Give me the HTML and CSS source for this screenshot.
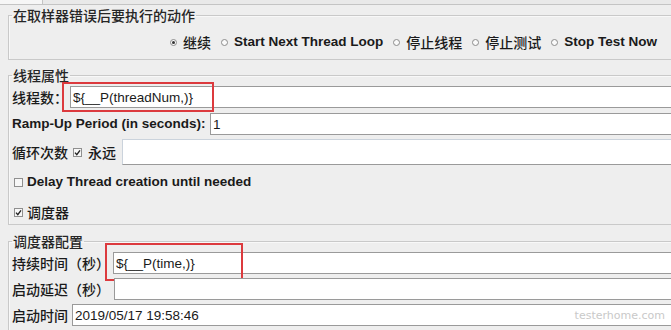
FILE: index.html
```html
<!DOCTYPE html>
<html lang="zh-CN">
<head>
<meta charset="utf-8">
<title>线程组</title>
<link rel="stylesheet" href="styles.css">
</head>
<body>
<div class="page">
  <div class="topbar"><div class="tab"></div></div>

  <fieldset class="group g-err">
    <legend>在取样器错误后要执行的动作</legend>
    <div class="radios">
      <label class="radio"><span class="dot on"></span><span class="cjk">继续</span></label>
      <label class="radio"><span class="dot"></span><span class="en">Start Next Thread Loop</span></label>
      <label class="radio"><span class="dot"></span><span class="cjk">停止线程</span></label>
      <label class="radio"><span class="dot"></span><span class="cjk">停止测试</span></label>
      <label class="radio"><span class="dot"></span><span class="en">Stop Test Now</span></label>
    </div>
  </fieldset>

  <fieldset class="group g-thread">
    <legend>线程属性</legend>
    <div class="row r1">
      <span class="label cjk w-num">线程数：</span>
      <div class="field"><span class="val">${__P(threadNum,)}</span><span class="mark m1"></span></div>
    </div>
    <div class="row r2">
      <span class="label en w-ramp">Ramp-Up Period (in seconds):</span>
      <div class="field"><span class="val">1</span></div>
    </div>
    <div class="row r3">
      <span class="label cjk w-loop">循环次数</span>
      <span class="check on"><svg viewBox="0 0 9 9" width="9" height="9"><path d="M2 4.6 L3.8 6.6 L7 2.4" fill="none" stroke="#222" stroke-width="1.4"/></svg></span>
      <span class="label cjk w-ever">永远</span>
      <div class="field light"></div>
    </div>
    <div class="row r4">
      <span class="check"></span>
      <span class="en">Delay Thread creation until needed</span>
    </div>
    <div class="row r5">
      <span class="check on"><svg viewBox="0 0 9 9" width="9" height="9"><path d="M2 4.6 L3.8 6.6 L7 2.4" fill="none" stroke="#222" stroke-width="1.4"/></svg></span>
      <span class="cjk">调度器</span>
    </div>
  </fieldset>

  <fieldset class="group g-sched">
    <legend>调度器配置</legend>
    <div class="row s1">
      <span class="label cjk w-dur">持续时间（秒）</span>
      <div class="field"><span class="val">${__P(time,)}</span><span class="mark m2"></span></div>
    </div>
    <div class="row s2">
      <span class="label cjk w-delay">启动延迟（秒）</span>
      <div class="field"></div>
    </div>
    <div class="row s3">
      <span class="label cjk w-start">启动时间</span>
      <div class="field"><span class="val">2019/05/17 19:58:46</span></div>
    </div>
  </fieldset>

  <div class="watermark">testerhome.com</div>
</div>
</body>
</html>
```

FILE: styles.css
```css
html, body {
  margin: 0;
  padding: 0;
  background: #eeeeee;
  overflow: hidden;
}

.page {
  position: relative;
  width: 671px;
  height: 330px;
  overflow: hidden;
  background: #eeeeee;
  color: #1a1a1a;
  font-family: "Liberation Sans", Arial, "Noto Sans CJK SC", sans-serif;
}

.cjk {
  font-family: "Noto Sans CJK SC", sans-serif;
  font-weight: 500;
  font-size: 14px;
  line-height: 18px;
}

.en {
  font-family: "Liberation Sans", Arial, sans-serif;
  font-weight: bold;
  font-size: 13.5px;
  line-height: 18px;
}

.topbar {
  height: 4px;
  border-bottom: 1px solid #c4c4c4;
  background: #e9e9e9;
}

.tab {
  width: 43px;
  height: 4px;
  box-sizing: border-box;
  border-right: 1px solid #c4c4c4;
  background: #f6f6f6;
}

.group {
  margin: 0 -40px 0 8px;
  border: 1px solid #c9c9c9;
  box-shadow: inset 1px 1px 0 #f8f8f8;
  padding: 0 0 0 3px;
  min-width: 0;
}

.group legend {
  font-family: "Noto Sans CJK SC", sans-serif;
  font-weight: 500;
  font-size: 14px;
  line-height: 18px;
  color: #262626;
  padding: 0 1px;
}

.g-err {
  margin-top: 1px;
  padding-top: 8px;
  padding-bottom: 7px;
}

.g-thread {
  margin-top: 6px;
  padding-top: 2px;
  padding-bottom: 2px;
}

.g-sched {
  margin-top: 7px;
  padding-top: 2px;
  padding-bottom: 10px;
}

.radios {
  display: flex;
  align-items: center;
  height: 20px;
  padding-left: 158px;
}

.radio {
  display: flex;
  align-items: center;
  margin-right: 10px;
}

.dot {
  width: 7px;
  height: 7px;
  box-sizing: border-box;
  border: 1px solid #8c8c8c;
  border-radius: 50%;
  background: #fafafa;
  margin-right: 6px;
  display: flex;
  align-items: center;
  justify-content: center;
}

.dot.on::after {
  content: "";
  width: 3px;
  height: 3px;
  border-radius: 50%;
  background: #333;
}

.row {
  display: flex;
  align-items: center;
  white-space: nowrap;
}

.r1 { height: 22px; }
.r2 { height: 22px; margin-top: 5px; }
.r3 { height: 26px; margin-top: 4px; }
.r4 { height: 20px; margin-top: 7px; padding-left: 2px; }
.r5 { height: 20px; margin-top: 10px; padding-left: 2px; }
.s1 { height: 22px; }
.s2 { height: 22px; margin-top: 4px; }
.s3 { height: 22px; margin-top: 4px; }

.label { flex: none; }
.w-num { width: 58px; }
.w-ramp { width: 198px; }
.w-loop { width: 61px; }
.w-ever { width: 34px; }
.w-dur { width: 101px; }
.w-delay { width: 102px; }
.w-start { width: 60px; }

.check {
  flex: none;
  width: 9px;
  height: 9px;
  box-sizing: border-box;
  border: 1px solid #8f8f8f;
  background: #f7f7f7;
  margin-right: 4px;
  position: relative;
}

.check svg {
  position: absolute;
  left: -1px;
  top: -1px;
}

.r3 .check { margin-right: 6px; }

.field {
  position: relative;
  flex: 1;
  align-self: stretch;
  box-sizing: border-box;
  border: 1px solid #9a9a9a;
  background: #ffffff;
  display: flex;
  align-items: center;
  padding-left: 2px;
}

.field.light {
  border-top-color: #cbd3dc;
  border-left-color: #cbd3dc;
}

.val {
  font-family: "Liberation Sans", Arial, sans-serif;
  font-size: 13.5px;
  color: #1a1a1a;
}

.mark {
  position: absolute;
  border: 2px solid #dc3a3e;
  box-sizing: border-box;
  pointer-events: none;
}

.m1 {
  left: -9px;
  top: -5px;
  width: 152px;
  height: 30px;
}

.m2 {
  left: -9px;
  top: -10px;
  width: 138px;
  height: 38px;
}

.watermark {
  position: absolute;
  right: 6px;
  top: 309px;
  font-family: "DejaVu Sans", sans-serif;
  font-size: 11px;
  line-height: 14px;
  color: #c9c9c9;
}
```
